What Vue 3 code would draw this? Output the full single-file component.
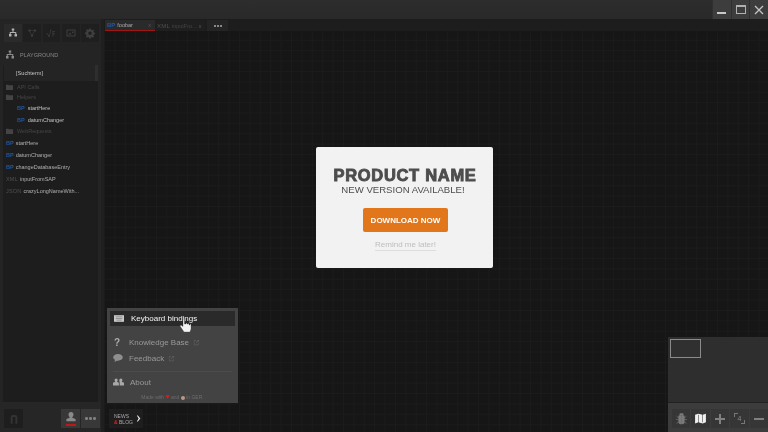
<script setup>
const tabs = [
  'M12 3h-2.500v4H11v3H5.500v4H4v5h5v-5H7.500v-2h9v2H15v5h5v-5h-1.500v-4H13V7h1.500V3z',
  'M5 5h4v4H5zM16 5h4v4h-4zM10 15h4v4h-4zM9 7h7v1H9zM8 9l3 6-1 .5-3-6zM17 9l-3 6-1-.5 3-6z',
  'M3 13h3l2 6 3-14h2v1.500h-1L9 20H7l-2-5.500H3zM15 8h5v1.500h-3.500V13H20v1.500h-3.500V19H15z',
  'M3 5h18v14H3zM5 7v10h14V7zM14 9h3v3h-3zM7 15l3-4 2 2 1 2z',
  'M10.500 3h3l.5 2.500 2 .9 2.200-1.400 2 2-1.400 2.200.9 2 2.300.5v3l-2.300.5-.9 2 1.400 2.200-2 2-2.200-1.400-2 .9-.5 2.300h-3l-.5-2.300-2-.9-2.200 1.400-2-2 1.400-2.200-.9-2L2 14v-3l2.300-.5.9-2-1.400-2.200 2-2 2.200 1.400 2-.9zM12 9a3.500 3.500 0 100 7 3.500 3.500 0 000-7z',
]
const tree = [
  { kind: 'folder', name: 'API Calls' },
  { kind: 'folder', name: 'Helpers' },
  { kind: 'bp', name: 'startHere' },
  { kind: 'bp', name: 'datumChanger' },
  { kind: 'folder', name: 'WebRequests' },
]
const files = [
  { tag: 'BP', cls: 'blue', name: 'startHere' },
  { tag: 'BP', cls: 'blue', name: 'datumChanger' },
  { tag: 'BP', cls: 'blue', name: 'changeDatabaseEntry' },
  { tag: 'XML', cls: 'grey', name: 'inputFromSAP' },
  { tag: 'JSON', cls: 'grey', name: 'crazyLongNameWith...' },
]
const ext = 'M2 3h5v1.500H3.500v8h8V9H13v5H2zM9 2h5v5l-1.800-1.800L8 9.400 6.600 8l4.200-4.200z'
</script>

<template>
  <div class="app">
    <header class="titlebar">
      <div class="winbtns">
        <button class="win"><span class="min"></span></button>
        <button class="win"><span class="max"></span></button>
        <button class="win">
          <svg viewBox="0 0 10 10" width="10" height="10"><path d="M1 1l8 8M9 1l-8 8" stroke="#c4c4c4" stroke-width="1.300" /></svg>
        </button>
      </div>
    </header>

    <div class="main">
      <aside class="sidebar">
        <div class="sidetop">
          <div class="icontabs">
            <div v-for="(d, i) in tabs" :key="i" class="icontab" :class="{ on: i === 0 }">
              <svg viewBox="0 0 24 24" width="12" height="12"><path :d="d" fill-rule="evenodd" /></svg>
            </div>
          </div>
          <div class="project">
            <svg viewBox="0 0 24 24" width="12" height="12"><path :d="tabs[0]" /></svg>
            <span>PLAYGROUND</span>
          </div>
          <div class="tree">
            <div class="search">[Suchterm]</div>
            <div class="treelist">
              <div v-for="t in tree" :key="t.name" class="node" :class="t.kind">
                <svg v-if="t.kind === 'folder'" viewBox="0 0 12 10" width="7" height="6"><path d="M0 1h4l1 1h7v8H0z" /></svg>
                <b v-else class="tag blue">BP</b>
                <span>{{ t.name }}</span>
              </div>
            </div>
            <div class="files">
              <div v-for="f in files" :key="f.name" class="file">
                <b class="tag" :class="f.cls">{{ f.tag }}</b>
                <span>{{ f.name }}</span>
              </div>
            </div>
          </div>
        </div>
        <footer class="sidefoot">
          <div class="footbtn dim">
            <svg viewBox="0 0 12 14" width="8" height="10"><path d="M1 14V4a3 3 0 013-3h4a3 3 0 013 3v10H8V4H4v10z" fill="#333" /></svg>
          </div>
          <div class="spacer"></div>
          <div class="footbtn user">
            <svg viewBox="0 0 12 12" width="10" height="10"><path d="M6 0a3 3 0 013 3c0 1.500-.7 2.600-1.500 3.200V7l4 1.500V11H.5V8.500l4-1.500v-.8C3.700 5.600 3 4.500 3 3a3 3 0 013-3z" fill="#8a8a8a" /></svg>
            <i></i>
          </div>
          <div class="footbtn more"><s></s><s></s><s></s></div>
        </footer>
      </aside>

      <section class="canvas">
        <div class="tabbar">
          <div class="tab active"><b class="tag blue">BP</b><span>foobar</span><em>x</em></div>
          <div class="tab"><b class="tag grey">XML</b><span class="dimtext">inputFro...</span><em>x</em></div>
          <div class="tab moretab"><s></s><s></s><s></s></div>
        </div>

        <div class="dialog">
          <h1>PRODUCT NAME</h1>
          <h2>NEW VERSION AVAILABLE!</h2>
          <button class="download">DOWNLOAD NOW</button>
          <a class="remind">Remind me later!</a>
        </div>

        <div class="helpmenu">
          <div class="item hot">
            <svg viewBox="0 0 12 8" width="10" height="7"><path d="M0 0h12v8H0z" fill="#c9c9c9" /><path d="M2 2h8M2 4h8M3 6h6" stroke="#777" stroke-width=".8" /></svg>
            <span>Keyboard bindings</span>
          </div>
          <div class="item gap">
            <b class="q">?</b><span>Knowledge Base</span>
            <svg class="ext" viewBox="0 0 16 16" width="7" height="7"><path :d="ext" /></svg>
          </div>
          <div class="item">
            <svg viewBox="0 0 12 10" width="10" height="8"><path d="M6 0c3.300 0 6 1.800 6 4.200S9.300 8.400 6 8.400c-.5 0-1 0-1.400-.1L1.500 10l.8-2.500C.9 6.700 0 5.500 0 4.200 0 1.800 2.700 0 6 0z" fill="#8e8e8e" /></svg>
            <span>Feedback</span>
            <svg class="ext" viewBox="0 0 16 16" width="7" height="7"><path :d="ext" /></svg>
          </div>
          <div class="sep"></div>
          <div class="item">
            <svg viewBox="0 0 14 9" width="11" height="8"><path d="M4 0a2 2 0 012 2c0 1-.4 1.700-1 2.200l2.500 1.300V9H0V5.500l3-1.300C2.400 3.700 2 3 2 2a2 2 0 012-2zM10 0a2 2 0 012 2c0 1-.4 1.700-1 2.200l3 1.300V9H8.500V5L8.300 4.200C8.100 3.800 8 3 8 2a2 2 0 012-2z" fill="#a8a8a8" /></svg>
            <span>About</span>
          </div>
          <div class="made">Made with <span class="heart">♥</span> and <span class="cup"></span> in GER.</div>
          <svg class="cursor" viewBox="0 0 11 13" width="11" height="13"><path d="M3 0h1.500v5H6V4h1v1h1V4.500h1V6h1v-1h1v5l-1 3H4L0 7l1-1 2 1.500z" fill="#f4f4f4" stroke="#222" stroke-width=".3" /></svg>
        </div>

        <div class="news">
          <div class="newstext"><span>NEWS</span><span><b>&amp;</b> BLOG</span></div>
          <svg viewBox="0 0 6 10" width="4" height="7"><path d="M1 0l4 5-4 5-1-1 2.500-4L0 1z" fill="#eee" /></svg>
        </div>

        <div class="minimap"><div class="viewport"></div></div>
        <div class="tools">
          <div class="tool"><svg viewBox="0 0 24 24" width="13" height="13"><path d="M9 3h6v3H9zM7 7h4.500v15H10a3 3 0 01-3-3zM12.500 7H17v12a3 3 0 01-3 3h-1.500zM3 8l4 3M21 8l-4 3M2 14h5M22 14h-5M3 21l4-3M21 21l-4-3" fill="#7b7b7b" stroke="#7b7b7b" stroke-width="1.200" /></svg></div>
          <div class="tool"><svg viewBox="0 0 24 24" width="13" height="13"><path d="M2 5l6-2 8 2 6-2v16l-6 2-8-2-6 2zM8 5v14l1 .2V5.200zM15 5v14l1 .2V5.200z" fill="#f0f0f0" /></svg></div>
          <div class="tool"><svg viewBox="0 0 24 24" width="12" height="12"><path d="M10 2h4v8h8v4h-8v8h-4v-8H2v-4h8z" fill="#808080" /></svg></div>
          <div class="tool zoom"><span>4</span><i class="tl"></i><i class="br"></i></div>
          <div class="tool"><svg viewBox="0 0 24 24" width="12" height="12"><path d="M2 10h20v4H2z" fill="#808080" /></svg></div>
        </div>
      </section>
    </div>
  </div>
</template>

<style>
html, body { margin: 0; background: #151515; }
</style>

<style scoped>
.app {
  width: 768px; height: 432px; display: flex; flex-direction: column; overflow: hidden;
  font-family: "Liberation Sans", Arial, sans-serif; background: #151515; color: #ccc;
  filter: blur(.3px);
}
.titlebar {
  height: 19px; flex: none; display: flex; justify-content: flex-end;
  background: linear-gradient(#2d2d2d, #292929);
}
.winbtns { display: flex; }
.win {
  width: 18.670px; height: 19px; padding: 0; border: 0; background: #3d3d3d;
  border-left: 1px solid #303030; display: flex; align-items: center; justify-content: center;
}
.min { width: 9px; height: 2px; background: #c8c8c8; margin-top: 7px; }
.max { width: 8px; height: 6px; border: 1px solid #b0b0b0; border-top-width: 2px; }
.main { flex: 1; display: flex; min-height: 0; }

.sidebar {
  width: 101px; flex: none; display: flex; flex-direction: column;
  background: #242424; border-right: 3px solid #1f1f1f;
}
.sidetop { flex: 1; padding: 5px 2px 0 4px; display: flex; flex-direction: column; min-height: 0; }
.icontabs { display: flex; gap: 1.500px; flex: none; }
.icontab {
  width: 18px; height: 18px; display: flex; align-items: center; justify-content: center;
  background: #1f1f1f; fill: #3f3f3f;
}
.icontab.on { background: #2a2a2a; fill: #b0b0b0; }
.project {
  display: flex; align-items: center; gap: 4px; height: 23px; padding: 3px 0 0; box-sizing: border-box; flex: none;
  fill: #8a8a8a; font-size: 5.500px; color: #888;
}
.tree { flex: 1; background: #1d1d1d; width: 94px; margin-left: -1px; padding-left: 1px; }
.search {
  height: 16px; line-height: 16px; padding-left: 12px; font-size: 5.600px; color: #c4c4c4; background: #242424;
  box-shadow: inset -3px 0 0 #2e2e2e;
}
.treelist { padding-top: 1px; }
.node { height: 10px; display: flex; align-items: center; font-size: 5.500px; }
.node.folder { padding-left: 2px; gap: 4px; color: #464646; fill: #444; }
.node.bp { padding-left: 13px; gap: 3px; color: #c0c0c0; height: 12px; }
.tag { font-size: 5.500px; font-weight: 700; }
.tag.blue { color: #2058a0; }
.tag.grey { color: #505050; font-weight: 400; letter-spacing: .2px; }
.files { padding-top: 1px; }
.file { height: 12px; display: flex; align-items: center; gap: 2px; padding-left: 2px; font-size: 5.500px; color: #b0b0b0; }
.sidefoot { height: 30px; box-sizing: border-box; flex: none; display: flex; align-items: flex-end; gap: 1px; padding: 0 1px 4px 4px; background: #262626; }
.spacer { flex: 1; }
.footbtn { width: 19px; height: 19px; position: relative; display: flex; align-items: center; justify-content: center; gap: 1.500px; background: #383838; }
.footbtn.dim { background: #1e1e1e; }
.footbtn.user svg { margin-bottom: 3px; }
.footbtn i { position: absolute; left: 5px; bottom: 2.500px; width: 10px; height: 2px; background: #c01818; }
.footbtn s, .moretab s { width: 2.500px; height: 2.500px; background: #808080; border-radius: 50%; }

.canvas {
  flex: 1; position: relative; min-width: 0;
  background-color: #161616;
  background-image: linear-gradient(#1b1b1b 1px, transparent 1px), linear-gradient(90deg, #1b1b1b 1px, transparent 1px);
  background-size: 10.400px 10.400px;
}
.tabbar { height: 12px; box-sizing: border-box; padding-top: 1px; margin-left: 1px; display: flex; background: #1d1d1d; }
.tab { width: 50px; height: 11px; padding: 0 2px; box-sizing: border-box; display: flex; align-items: center; gap: 2px; font-size: 5.500px; color: #777; background: #1f1f1f; }
.tab.active { background: #2a2a2a; border-bottom: 1.500px solid #a01616; color: #aaa; }
.tab .tag { font-size: 6px; }
.tab em { margin-left: auto; margin-right: 2px; font-style: normal; color: #555; }
.dimtext { color: #454545; }
.moretab { width: 21px; margin-left: 2px; justify-content: center; gap: 1px; background: #242424; }
.moretab s { background: #aaa; width: 2px; height: 2px; }

.dialog {
  position: absolute; left: 212px; top: 128px; width: 177px; height: 121px; box-sizing: border-box;
  background: #f2f2f2; border-radius: 2px; text-align: center; padding-top: 19px;
}
.dialog h1 { margin: 0 0 0 1px; font-size: 16.500px; line-height: 18px; font-weight: 700; color: #4d4d4d; letter-spacing: .7px; -webkit-text-stroke: .9px #4d4d4d; }
.dialog h2 { margin: 0 0 0 -3px; font-size: 9.600px; line-height: 12px; font-weight: 400; color: #4d4d4d; }
.download {
  display: block; width: 85px; height: 24px; margin: 12px auto 0; padding: 0; border: 0; border-radius: 2px;
  background: #e2761a; color: #fff; font: 700 8px "Liberation Sans", Arial, sans-serif;
  position: relative; left: 1px;
}
.remind { display: inline-block; margin-top: 8px; font-size: 8px; line-height: 10px; color: #bdbdbd; border-bottom: 1px solid #ddd; position: relative; left: 1px; }

.helpmenu {
  position: absolute; left: 3px; top: 289px; width: 131px; height: 95px; box-sizing: border-box;
  padding: 3px 3px 0; background: #434343; color: #999; font-size: 8px;
}
.item { display: flex; align-items: center; height: 16px; padding-left: 3px; }
.item > span { margin-left: 6px; }
.item .q + span { margin-left: 8px; }
.item.hot { background: #2a2a2a; color: #f4f4f4; height: 15px; padding-left: 4px; }
.item.hot > span { margin-left: 7px; }
.item.gap { margin-top: 8px; }
.q { width: 8px; text-align: center; font-size: 10px; color: #aaa; }
.ext { margin-left: 4px; fill: #5c5c5c; }
.sep { height: 1px; margin: 5px 3px 2px; background: #4c4c4c; }
.made { text-align: center; font-size: 5px; color: #6c6c6c; margin-top: 2px; line-height: 10px; }
.heart { color: #cf2222; font-size: 7px; }
.cup { display: inline-block; width: 4px; height: 4px; border-radius: 2px; background: #b98; vertical-align: -0.500px; }
.cursor { position: absolute; left: 73px; top: 11px; }

.news { position: absolute; left: 5px; top: 390px; width: 34px; height: 19px; box-sizing: border-box; padding: 0 2px 0 5px; display: flex; align-items: center; justify-content: space-between; background: #1e1e1e; }
.newstext { display: flex; flex-direction: column; font-size: 5px; line-height: 6px; color: #aaa; }
.newstext b { color: #d22; }

.minimap { position: absolute; right: 0; top: 318px; width: 100px; height: 66px; background: #2e2e2e; border-bottom: 1px solid #222; box-sizing: border-box; }
.viewport { width: 29px; height: 17px; margin: 2px 0 0 2px; border: 1px solid #8b8b8b; background: #303030; }
.tools { position: absolute; right: 0; bottom: 0; width: 100px; height: 29px; box-sizing: border-box; padding: 6px 0 4px 4px; display: flex; gap: 1px; background: #3c3c3c; }
.tool { width: 18.500px; height: 19px; position: relative; display: flex; align-items: center; justify-content: center; background: #363636; }
.zoom span { font-size: 7px; color: #888; }
.zoom i { position: absolute; width: 3px; height: 3px; border: 1px solid #777; }
.zoom .tl { left: 4px; top: 4px; border-right: 0; border-bottom: 0; }
.zoom .br { right: 4px; bottom: 4px; border-left: 0; border-top: 0; }
</style>
